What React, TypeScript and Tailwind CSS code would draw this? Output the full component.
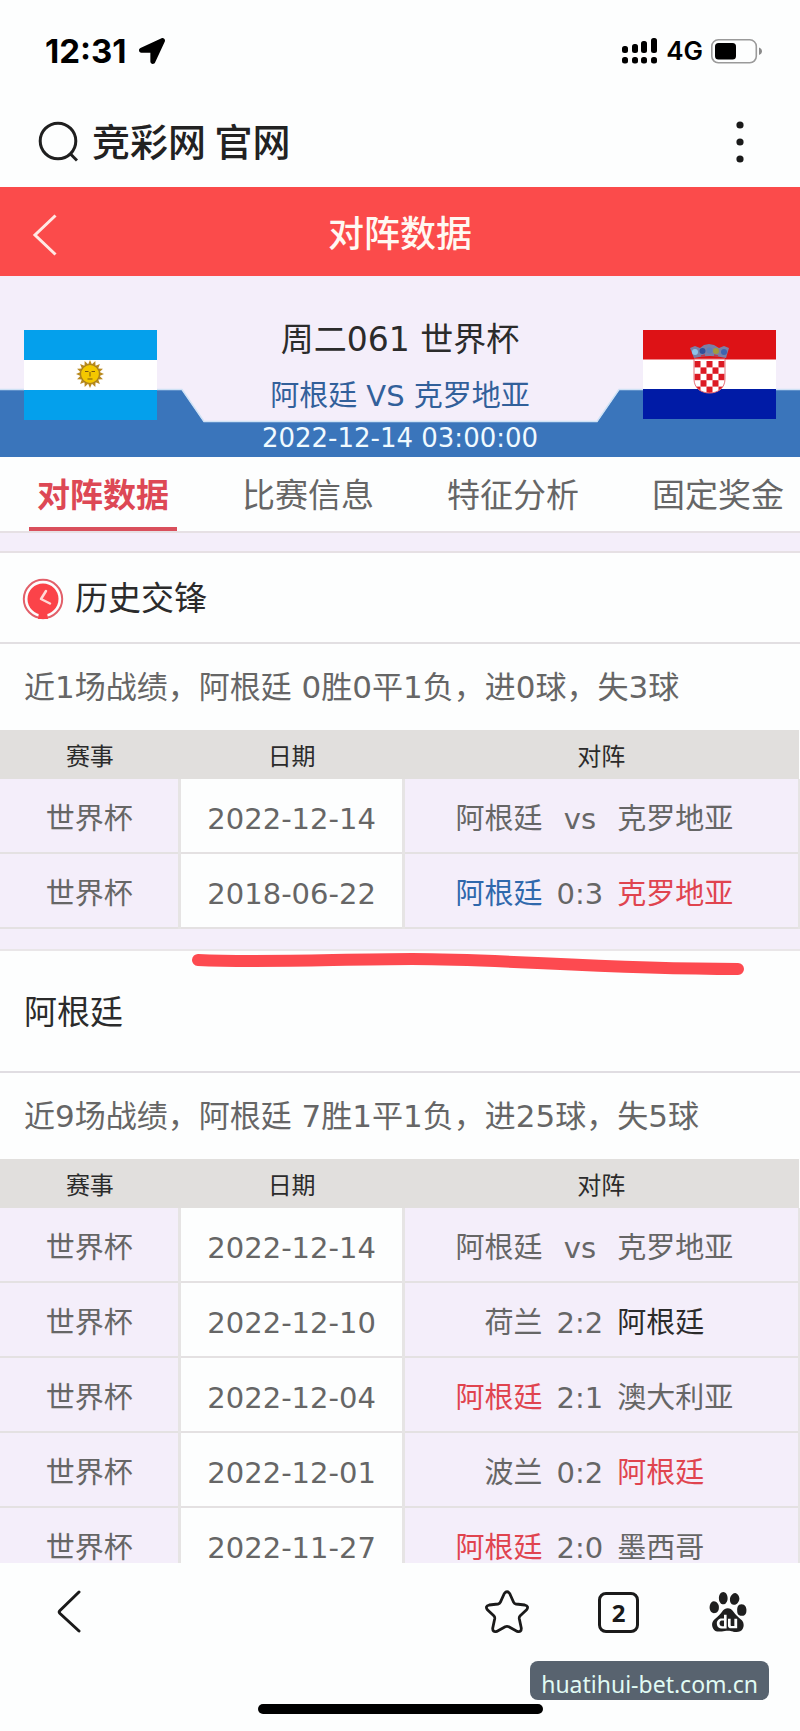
import { useState } from 'react';
import { FaLocationArrow } from 'react-icons/fa';
import { SiBaidu } from 'react-icons/si';
import clsx from 'clsx';

type Tone = 'plain' | 'win' | 'loss' | 'draw';

interface Match {
  event: string;
  date: string;
  home: string;
  homeTone?: Tone;
  score: string;
  away: string;
  awayTone?: Tone;
}

const TABS = ['对阵数据', '比赛信息', '特征分析', '固定奖金'];

const TONE_CLASS: Record<Tone, string> = {
  plain: 'text-[#666]',
  win: 'text-[#e0444f]',
  loss: 'text-[#2f68ac]',
  draw: 'text-[#2b2b2b]',
};

const HEAD_TO_HEAD: Match[] = [
  { event: '世界杯', date: '2022-12-14', home: '阿根廷', score: 'vs', away: '克罗地亚' },
  { event: '世界杯', date: '2018-06-22', home: '阿根廷', homeTone: 'loss', score: '0:3', away: '克罗地亚', awayTone: 'win' },
];

const ARGENTINA: Match[] = [
  { event: '世界杯', date: '2022-12-14', home: '阿根廷', score: 'vs', away: '克罗地亚' },
  { event: '世界杯', date: '2022-12-10', home: '荷兰', score: '2:2', away: '阿根廷', awayTone: 'draw' },
  { event: '世界杯', date: '2022-12-04', home: '阿根廷', homeTone: 'win', score: '2:1', away: '澳大利亚' },
  { event: '世界杯', date: '2022-12-01', home: '波兰', score: '0:2', away: '阿根廷', awayTone: 'win' },
  { event: '世界杯', date: '2022-11-27', home: '阿根廷', homeTone: 'win', score: '2:0', away: '墨西哥' },
];

function StatusBar() {
  return (
    <div className="flex items-center justify-between pt-[26px] pl-[45px] pr-[37px] h-[76px] shrink-0 font-['Inter',sans-serif] text-black">
      <div className="flex items-center gap-3">
        <span className="text-[33px] leading-[46px] font-bold">12:31</span>
        <FaLocationArrow className="w-[26px] h-[26px]" />
      </div>
      <div className="flex items-center gap-2">
        <svg width="36" height="27" viewBox="0 0 36 27">
          <rect x="0" y="8" width="6" height="7" rx="2.5" />
          <rect x="10" y="6" width="6" height="9" rx="2.5" />
          <rect x="19" y="3" width="6" height="12" rx="2.5" />
          <rect x="29" y="0" width="6" height="15" rx="2.5" />
          <rect x="0" y="19" width="6" height="6.500" rx="2.5" />
          <rect x="10" y="19" width="6" height="6.500" rx="2.5" />
          <rect x="19" y="19" width="6" height="6.500" rx="2.5" />
          <rect x="29" y="19" width="6" height="6.500" rx="2.5" />
        </svg>
        <span className="text-[26px] leading-[46px] font-semibold">4G</span>
        <svg width="52" height="25" viewBox="0 0 52 25">
          <rect x="0.8" y="0.8" width="44.500" height="23" rx="6.5" fill="none" stroke="#9a9a9a" strokeWidth="1.6" />
          <rect x="4" y="4" width="21" height="16.500" rx="3.500" />
          <path d="M48 8.500c4 1.500 4 6 0 7.500z" fill="#8a8a8a" />
        </svg>
      </div>
    </div>
  );
}

function SearchBar() {
  return (
    <div className="flex items-center justify-between pl-[38px] pr-14 pt-5 h-[111px] shrink-0">
      <div className="flex items-center gap-[14px]">
        <svg width="40" height="41" viewBox="0 0 40 41" fill="none" stroke="#1f1f1f" strokeWidth="3">
          <circle cx="20" cy="20" r="17.800" />
          <path d="M32 32.500l7 7" />
        </svg>
        <span className="pb-1 text-[38px] leading-[56px] font-medium text-[#222] font-['Noto_Sans_CJK_SC',sans-serif]">竞彩网 官网</span>
      </div>
      <button type="button" aria-label="更多">
        <svg width="8" height="42" viewBox="0 0 8 42" fill="#1a1a1a">
          <circle cx="4" cy="4" r="3.600" />
          <circle cx="4" cy="21" r="3.600" />
          <circle cx="4" cy="38" r="3.600" />
        </svg>
      </button>
    </div>
  );
}

function ArgentinaFlag() {
  const rays = Array.from({ length: 16 }, (_, i) => i * 22.5);
  return (
    <svg width="133" height="90" viewBox="0 0 133 90">
      <rect width="133" height="90" fill="#fff" />
      <rect width="133" height="30" fill="#04a0ec" />
      <rect y="60" width="133" height="30" fill="#04a0ec" />
      <g transform="translate(66 44)">
        {rays.map((deg) => (
          <path key={deg} d="M-2.200 -9L0 -14L2.200 -9z" fill="#b98a20" transform={`rotate(${deg})`} />
        ))}
        <circle r="9.500" fill="#f4c800" stroke="#a8801e" strokeWidth="1.200" />
        <path d="M-5 -2.500h3.500M1.500 -2.500h3.500M0 -2v4.500M-2.500 5h5" stroke="#7a5a10" strokeWidth="1" fill="none" />
      </g>
    </svg>
  );
}

function CroatiaFlag() {
  const squares = [];
  for (let row = 0; row < 5; row++) {
    for (let col = 0; col < 5; col++) {
      if ((row + col) % 2 === 0) {
        squares.push(<rect key={`${row}-${col}`} x={51.5 + col * 6} y={31 + row * 6.4} width="6" height="6.4" fill="#dc1a24" />);
      }
    }
  }
  return (
    <svg width="133" height="89" viewBox="0 0 133 89">
      <clipPath id="shield">
        <path d="M51 29h31v20c0 9-7 14-15.500 14S51 58 51 49z" />
      </clipPath>
      <rect width="133" height="30" fill="#dd1216" />
      <rect y="29.500" width="133" height="30" fill="#fff" />
      <rect y="59" width="133" height="30" fill="#001ba6" />
      <path d="M51 29h31v20c0 9-7 14-15.500 14S51 58 51 49z" fill="#fff" />
      <g clipPath="url(#shield)">{squares}</g>
      <path d="M51 29h31v20c0 9-7 14-15.500 14S51 58 51 49z" fill="none" stroke="#e87078" strokeWidth="1" />
      <path d="M47 18l5 -2l5 2l4 -3l5 -1l5 1l5 3l5 -2l5 2l-3 10q-16 -4 -32 0z" fill="#7a7fa6" />
      <circle cx="52" cy="22" r="3" fill="#8fc3e8" />
      <circle cx="59.500" cy="21" r="3" fill="#32509a" />
      <circle cx="66.500" cy="20.500" r="3" fill="#5f7fb8" />
      <circle cx="73" cy="21" r="3" fill="#a39a3c" />
      <circle cx="81" cy="22" r="3" fill="#3f63ae" />
      <path d="M58 26l4 -1M71 25l4 1" stroke="#c33b4a" strokeWidth="1.500" />
    </svg>
  );
}

function MatchBanner() {
  return (
    <section className="relative bg-[#f4eefa]">
      <svg className="absolute inset-0 w-full h-full" viewBox="0 0 800 181" preserveAspectRatio="none">
        <path d="M0 114H182L204 146H597L619 114H800V181H0z" fill="#3a75bb" />
        <path d="M0 113.500H182L204 145.500H597L619 113.500H800" fill="none" stroke="#cfe2f5" strokeWidth="1.500" />
      </svg>
      <div className="relative flex justify-between px-6 pt-10 pb-px">
        <div className="pt-[14px]">
          <ArgentinaFlag />
        </div>
        <div className="text-center">
          <h2 className="text-[33px] leading-[48px] text-[#2b2b2b]">周二061 世界杯</h2>
          <p className="mt-2 text-[29px] leading-[48px] text-[#32609a]">阿根廷 VS 克罗地亚</p>
          <p className="text-[26px] leading-9 text-[#f0faff]">2022-12-14 03:00:00</p>
        </div>
        <div className="pt-[14px]">
          <CroatiaFlag />
        </div>
      </div>
    </section>
  );
}

function ClockIcon() {
  return (
    <svg width="42" height="42" viewBox="0 0 42 42" fill="none">
      <circle cx="21" cy="21" r="19.200" stroke="#e2606a" strokeWidth="2" />
      <circle cx="21" cy="21" r="15.500" fill="#fb4349" />
      <path d="M17 34h8l1 7h-10z" fill="#fb4349" />
      <path d="M24 13l-5 8l9 4.500" stroke="#ffd9d6" strokeWidth="2.500" strokeLinejoin="round" strokeLinecap="round" />
    </svg>
  );
}

function MatchTable({ rows }: { rows: Match[] }) {
  return (
    <table className="w-full table-fixed border-collapse text-center">
      <colgroup>
        <col className="w-[22.5%]" />
        <col className="w-[28%]" />
        <col />
      </colgroup>
      <thead className="bg-[#e1dfdd] text-[24px] leading-[43px] text-[#2b2b2b]">
        <tr>
          <th className="px-0 pt-[6px] pb-0 font-normal">赛事</th>
          <th className="px-0 pt-[6px] pb-0 font-normal">日期</th>
          <th className="px-0 pt-[6px] pb-0 font-normal">对阵</th>
        </tr>
      </thead>
      <tbody className="text-[29px] leading-[41px] text-[#666]">
        {rows.map((m) => (
          <tr key={m.date} className="border-b-2 border-[#e4e1e2]">
            <td className="px-0 pt-5 pb-3 bg-[#f4eefa]">{m.event}</td>
            <td className="px-0 pt-5 pb-3 bg-[#fdfefe] border-x-3 border-[#e6e4e4]">{m.date}</td>
            <td className="px-0 pt-5 pb-3 bg-[#f4eefa] border-r-2 border-[#e6e4e4]">
              <div className="grid grid-cols-[35%_19%_46%]">
                <span className={clsx('text-right', TONE_CLASS[m.homeTone ?? 'plain'])}>{m.home}</span>
                <span>{m.score}</span>
                <span className={clsx('text-left', TONE_CLASS[m.awayTone ?? 'plain'])}>{m.away}</span>
              </div>
            </td>
          </tr>
        ))}
      </tbody>
    </table>
  );
}

function BottomBar() {
  return (
    <footer className="relative shrink-0 bg-[#fdfefe] pb-[17px]">
      <div className="flex items-center justify-between pl-[57px] pr-[52px] pt-[27px]">
        <button type="button" aria-label="后退">
          <svg width="24" height="44" viewBox="0 0 24 44" fill="none" stroke="#1a1a1a" strokeWidth="3" strokeLinecap="round" strokeLinejoin="round">
            <path d="M22 2L3 20.500q-1.500 1.500 0 3L22 41" />
          </svg>
        </button>
        <div className="flex items-center gap-[69px]">
          <button type="button" aria-label="收藏">
            <svg width="44" height="44" viewBox="0 0 44 44" fill="none" stroke="#1a1a1a" strokeWidth="2.800" strokeLinejoin="round">
              <path d="M19.300 3.500Q22 0 24.700 3.500L28.600 12.200Q29.300 13.700 31 14L39.800 15Q44.200 16.200 41.600 19.800L35.200 25.800Q34 27 34.300 28.800L36.300 38.200Q36.400 42.600 32.300 41.400L23.800 36.800Q22 36 20.200 36.800L11.700 41.400Q7.600 42.600 7.700 38.200L9.700 28.800Q10 27 8.800 25.800L2.400 19.800Q-0.200 16.200 4.200 15L13 14Q14.700 13.700 15.400 12.200z" />
            </svg>
          </button>
          <button type="button" aria-label="窗口" className="w-[41px] h-[41px] rounded-lg border-3 border-[#1a1a1a] text-[#1a1a1a] font-['Noto_Sans',sans-serif] font-bold text-2xl leading-[35px]">
            2
          </button>
          <button type="button" aria-label="百度">
            <SiBaidu className="w-10 h-10 text-[#1f1f1f]" />
          </button>
        </div>
      </div>
      <div className="mx-auto mt-[70px] h-[10px] w-[285px] rounded-full bg-black" />
      <div className="absolute right-[31px] bottom-[31px] h-[39px] rounded-lg bg-[#58636f] px-[11px] pt-1 text-[23px] leading-[39px] text-[#e0fbf4] font-['Noto_Sans',sans-serif]">
        huatihui-bet.com.cn
      </div>
    </footer>
  );
}

export default function App() {
  const [tab, setTab] = useState(TABS[0]);

  return (
    <div className="flex h-screen flex-col bg-[#fdfefe] font-['DejaVu_Sans','Noto_Sans_CJK_SC',sans-serif]">
      <StatusBar />
      <SearchBar />
      <main className="min-h-0 flex-1 overflow-hidden">
        <header className="grid grid-cols-[1fr_auto_1fr] items-center bg-[#fb4b4b] h-[89px] px-8 pt-[6px]">
          <button type="button" aria-label="返回" className="justify-self-start">
            <svg width="25" height="42" viewBox="0 0 25 42" fill="none" stroke="#ffe9e4" strokeWidth="3">
              <path d="M23.500 1.500L3 21l20.500 19.500" />
            </svg>
          </button>
          <h1 className="text-[36px] leading-[54px] font-medium text-[#fff8f2]">对阵数据</h1>
        </header>

        <MatchBanner />

        <nav className="flex gap-[57px] pl-[29px] border-b-2 border-[#e6e0e4] bg-[#fdfefe]">
          {TABS.map((name) => (
            <button
              key={name}
              type="button"
              onClick={() => setTab(name)}
              className={clsx(
                'shrink-0 border-b-4 px-2 pt-2 text-[33px] leading-[62px]',
                tab === name ? 'border-[#d94f5c] font-bold text-[#dd4855]' : 'border-transparent text-[#666]'
              )}
            >
              {name}
            </button>
          ))}
        </nav>

        <div className="h-5 border-b-2 border-[#e6e0e4] bg-[#f4eefa]" />

        <section>
          <h3 className="flex items-center gap-[11px] border-b-2 border-[#e2dfe2] px-[22px] pt-[3px] text-[33px] leading-[86px] text-[#2b2b2b]">
            <ClockIcon />
            历史交锋
          </h3>
          <p className="px-6 text-[31px] leading-[86px] text-[#666]">近1场战绩，阿根廷 0胜0平1负，进0球，失3球</p>
          <MatchTable rows={HEAD_TO_HEAD} />
        </section>

        <div className="h-[22px] border-b-2 border-[#e9e6e8] bg-[#f4eefa]" />

        <section className="relative">
          {/* hand-drawn underline over the section edge */}
          <svg className="absolute left-[24%] top-0 h-7 w-[69%]" viewBox="0 0 552 28" preserveAspectRatio="none">
            <path d="M6 9C70 12 150 8 220 8C320 8 400 18 546 18" fill="none" stroke="#fd4a50" strokeWidth="12" strokeLinecap="round" />
          </svg>
          <h3 className="border-b-2 border-[#e0dde2] px-6 pt-1 text-[33px] leading-[116px] text-[#2b2b2b]">阿根廷</h3>
          <p className="px-6 text-[31px] leading-[86px] text-[#666]">近9场战绩，阿根廷 7胜1平1负，进25球，失5球</p>
          <MatchTable rows={ARGENTINA} />
        </section>
      </main>
      <BottomBar />
    </div>
  );
}
